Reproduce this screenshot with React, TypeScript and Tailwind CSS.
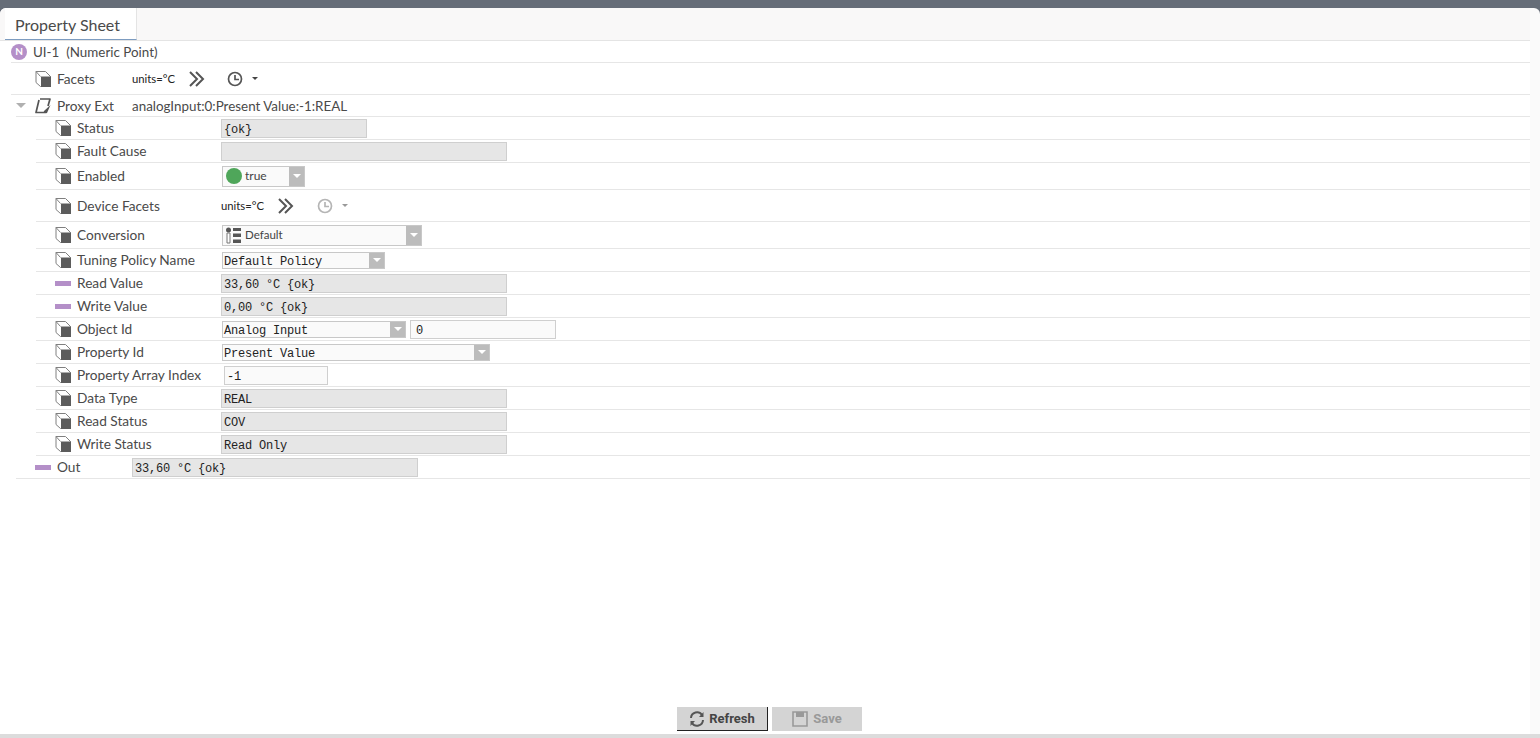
import React from "react";

const Cube = () => (
  <svg width="16" height="16" viewBox="0 0 16 16" className="shrink-0">
    <path d="M1 0.5 H10.5 L15.5 5.5 V15.5 H5.5 L1 11.5 Z" fill="#fff" stroke="#808080" strokeWidth="1" />
    <path d="M1 0.5 L5.5 5.5" fill="none" stroke="#808080" strokeWidth="1" />
    <path d="M6 5.5 H16 V16 H6 Z" fill="#5c5c5c" />
  </svg>
);

const Dash = () => <span className="block h-[5px] w-4 shrink-0 bg-[#b48fc8]" />;

const Proxy = () => (
  <svg width="16" height="16" viewBox="0 0 16 16" className="shrink-0">
    <path d="M5 1 H15 L13 8 M11.5 14.5 H1 L4 2" fill="none" stroke="#555" strokeWidth="1.7" strokeLinejoin="round" />
    <path d="M15.5 7 L9 13 L8.5 15 H12 Z" fill="#555" />
  </svg>
);

const Clock = ({ muted }: { muted?: boolean }) => (
  <svg width="16" height="16" viewBox="0 0 16 16" className="shrink-0">
    <circle cx="8" cy="8" r="6.5" fill="none" stroke={muted ? "#b5b5b5" : "#555"} strokeWidth="1.7" />
    <path d="M8 4 V8.5 H12" fill="none" stroke={muted ? "#b5b5b5" : "#555"} strokeWidth="1.7" />
  </svg>
);

const Chevrons = () => (
  <svg width="16" height="16" viewBox="0 0 16 16" className="shrink-0">
    <path d="M1 1 L8 8 L1 15 M7 1 L14 8 L7 15" fill="none" stroke="#555" strokeWidth="2" />
  </svg>
);

const Caret = ({ muted }: { muted?: boolean }) => (
  <span
    className={`block h-0 w-0 border-x-[3px] border-t-[3px] border-x-transparent ${
      muted ? "border-t-[#999]" : "border-t-[#444]"
    }`}
  />
);

const Mono = "font-['Liberation_Mono',monospace] text-[12px] tracking-[-0.2px] text-[#222]";
const Label = "font-['Lato',sans-serif] text-[13.7px] text-[#4a4a4a]";
const Value = "font-['Lato',sans-serif] text-[13.4px] text-[#4a4a4a]";

const ReadOnly = ({ w, children }: { w: string; children?: React.ReactNode }) => (
  <div className={`${w} ${Mono} flex h-[19px] items-center border border-[#cfcfcf] bg-[#e6e6e6] pl-[2px] pt-[3px]`}>
    {children}
  </div>
);

const Select = ({
  w,
  children,
  h = "h-[17px]",
  pt = "pt-[4px]",
}: {
  w: string;
  children: React.ReactNode;
  h?: string;
  pt?: string;
}) => (
  <div className={`${w} ${h} ml-[1px] flex items-stretch border border-[#c8c8c8] bg-[#fafafa]`}>
    <div className={`${Mono} flex min-w-0 flex-1 items-center pl-[1px] ${pt}`}>{children}</div>
    <div className="flex w-[15px] items-center justify-center bg-[#bcbcbc]">
      <span className="block h-0 w-0 border-x-[4px] border-t-[4px] border-x-transparent border-t-white" />
    </div>
  </div>
);

const Row = ({
  h,
  nested,
  top,
  keep,
  icon,
  label,
  children,
}: {
  h: string;
  nested?: boolean;
  top?: boolean;
  keep?: boolean;
  icon: React.ReactNode;
  label: string;
  children: React.ReactNode;
}) => (
  <div
    className={`${h} flex items-center border-b border-[#e6e6e6] ${
      nested ? "ml-[36px] pl-[19px]" : top ? "ml-[11px] pl-[24px]" : "ml-[16px] pl-[19px]"
    }`}
  >
    {icon}
    <span className={`${nested ? "w-[144px]" : "w-[75px]"} ml-[6px] ${keep ? "pt-[2px]" : ""} ${Label}`}>{label}</span>
    {children}
  </div>
);

export default function App() {
  return (
    <div className="flex h-[738px] w-[1540px] flex-col overflow-hidden bg-[#666d78] font-['Lato',sans-serif]">
      <div className="h-2 shrink-0" />
      <div className="flex min-h-0 flex-1">
        <div className="flex min-w-0 flex-1 flex-col rounded-tl-[6px] bg-white">
          <div className="flex h-[33px] shrink-0 rounded-tl-[6px] border-b border-[#e4e4e4] bg-[#f9f8f8]">
            <div className="ml-[5px] flex w-[132px] items-center border-r border-b border-r-[#e4e4e4] border-b-[#7d9cc0] bg-white pl-[10px] pt-[2px] text-[16px] text-[#4a4a4a]">
              Property Sheet
            </div>
          </div>
          <div className="ml-[11px] flex h-[22px] shrink-0 items-center border-b border-[#e6e6e6]">
            <span className="flex h-4 w-4 items-center justify-center rounded-full bg-[#b48fc8] text-[10px] font-bold text-white">N</span>
            <span className={`ml-[6px] pt-[2px] ${Value}`}>UI-1&nbsp;&nbsp;(Numeric Point)</span>
          </div>
          <Row h="h-[32px]" top keep icon={<Cube />} label="Facets">
            <span className="pt-[2px] text-[11.3px] text-[#222]">units=°C</span>
            <span className="ml-[14px]"><Chevrons /></span>
            <span className="ml-[22px]"><Clock /></span>
            <span className="ml-[9px]"><Caret /></span>
          </Row>
          <div className="ml-[16px] flex h-[22px] shrink-0 items-center border-b border-[#e6e6e6]">
            <span className="block h-0 w-0 border-x-[5px] border-t-[5px] border-x-transparent border-t-[#b0b0b0]" />
            <span className="ml-[9px]"><Proxy /></span>
            <span className={`ml-[6px] w-[75px] pt-[2px] ${Label}`}>Proxy Ext</span>
            <span className={`pt-[2px] ${Value}`}>analogInput:0:Present Value:-1:REAL</span>
          </div>
          <Row h="h-[23px]" nested icon={<Cube />} label="Status"><ReadOnly w="w-[146px]">{"{ok}"}</ReadOnly></Row>
          <Row h="h-[23px]" nested icon={<Cube />} label="Fault Cause"><ReadOnly w="w-[286px]" /></Row>
          <Row h="h-[27px]" nested icon={<Cube />} label="Enabled">
            <Select w="w-[83px]" h="h-[21px]" pt="pt-0">
              <span className="flex items-center font-['Lato',sans-serif] text-[12px] tracking-normal text-[#444]">
                <span className="mr-[3px] ml-[2px] block h-4 w-4 rounded-full bg-[#4fa65a]" />true
              </span>
            </Select>
          </Row>
          <Row h="h-[32px]" nested keep icon={<Cube />} label="Device Facets">
            <span className="pt-[2px] text-[11.3px] text-[#222]">units=°C</span>
            <span className="ml-[14px]"><Chevrons /></span>
            <span className="ml-[23px]"><Clock muted /></span>
            <span className="ml-[9px]"><Caret muted /></span>
          </Row>
          <Row h="h-[27px]" nested icon={<Cube />} label="Conversion">
            <Select w="w-[200px]" h="h-[21px]" pt="pt-0">
              <span className="flex items-center font-['Lato',sans-serif] text-[11.5px] tracking-normal text-[#444]">
                <svg width="17" height="17" viewBox="0 0 17 17" className="mr-[3px] ml-[1px] shrink-0">
                  <circle cx="3.5" cy="3" r="2.5" fill="#555" />
                  <path d="M2 6 H5 V16 H2 Z" fill="#fff" stroke="#777" />
                  <path d="M8 1 H16 V4 H8 Z M8 6.5 H16 V10 H8 Z M8 12.5 H16 V16 H8 Z" fill="#555" />
                </svg>
                Default
              </span>
            </Select>
          </Row>
          <Row h="h-[23px]" nested icon={<Cube />} label="Tuning Policy Name"><Select w="w-[163px]">Default Policy</Select></Row>
          <Row h="h-[23px]" nested icon={<Dash />} label="Read Value"><ReadOnly w="w-[286px]">33,60 °C {"{ok}"}</ReadOnly></Row>
          <Row h="h-[23px]" nested icon={<Dash />} label="Write Value"><ReadOnly w="w-[286px]">0,00 °C {"{ok}"}</ReadOnly></Row>
          <Row h="h-[23px]" nested icon={<Cube />} label="Object Id">
            <Select w="w-[184px]">Analog Input</Select>
            <div className={`${Mono} ml-[4px] flex h-[19px] w-[146px] items-center border border-[#cfcfcf] bg-[#fafafa] pl-[5px] pt-[3px]`}>0</div>
          </Row>
          <Row h="h-[23px]" nested icon={<Cube />} label="Property Id"><Select w="w-[268px]">Present Value</Select></Row>
          <Row h="h-[23px]" nested icon={<Cube />} label="Property Array Index">
            <div className={`${Mono} ml-[3px] flex h-[19px] w-[104px] items-center border border-[#cfcfcf] bg-[#fafafa] pl-[2px] pt-[3px]`}>-1</div>
          </Row>
          <Row h="h-[23px]" nested icon={<Cube />} label="Data Type"><ReadOnly w="w-[286px]">REAL</ReadOnly></Row>
          <Row h="h-[23px]" nested icon={<Cube />} label="Read Status"><ReadOnly w="w-[286px]">COV</ReadOnly></Row>
          <Row h="h-[23px]" nested icon={<Cube />} label="Write Status"><ReadOnly w="w-[286px]">Read Only</ReadOnly></Row>
          <Row h="h-[23px]" icon={<Dash />} label="Out"><ReadOnly w="w-[286px]">33,60 °C {"{ok}"}</ReadOnly></Row>
          <div className="flex-1" />
          <div className="mb-[3px] flex h-[24px] shrink-0 items-center justify-center gap-[4px] pl-[9px] font-['Roboto',sans-serif] text-[13px] font-bold">
            <button className="flex h-[24px] w-[91px] items-center justify-center gap-[4px] border-r border-b border-[#222] bg-[#d4d4d4] text-[#444]">
              <svg width="16" height="16" viewBox="0 0 16 16">
                <path d="M2 7 A6 6 0 0 1 13 4 M14 9 A6 6 0 0 1 3 12" fill="none" stroke="#555" strokeWidth="2" />
                <path d="M14.5 1 V6 H10 Z M1.5 15 V10 H6 Z" fill="#555" />
              </svg>
              Refresh
            </button>
            <button className="flex h-[24px] w-[90px] items-center justify-center gap-[5px] bg-[#d4d4d4] text-[#999]">
              <svg width="16" height="16" viewBox="0 0 16 16">
                <path d="M1 1 H15 V15 H1 Z" fill="none" stroke="#999" strokeWidth="1.6" />
                <path d="M4 1 H12 V6 H4 Z" fill="#999" />
              </svg>
              Save
            </button>
          </div>
        </div>
        <div className="w-[10px] shrink-0 rounded-tr-[6px] bg-[#fafafa]" />
      </div>
      <div className="h-1 shrink-0 bg-[#dcdcdc]" />
    </div>
  );
}
